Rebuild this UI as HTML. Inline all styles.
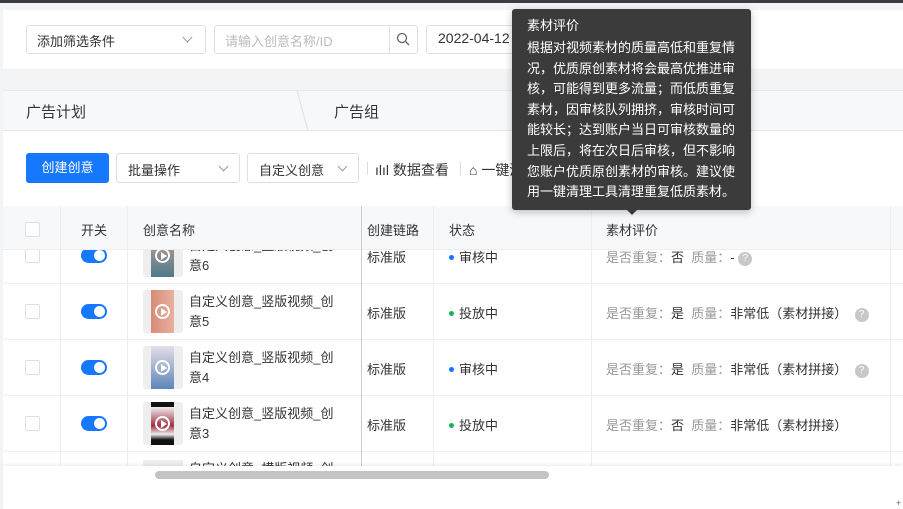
<!DOCTYPE html>
<html><head><meta charset="utf-8"><style>
*{box-sizing:border-box;margin:0;padding:0}
body{width:903px;height:509px;overflow:hidden;background:#f3f4f6;font-family:"Liberation Sans","Noto Sans CJK SC",sans-serif;font-size:13px;color:#333;position:relative}
.a{position:absolute}
.box{position:absolute;background:#fff;border:1px solid #dcdfe6;border-radius:3px}
.chev{position:absolute;width:7px;height:7px;border-right:1px solid #999;border-bottom:1px solid #999;transform:rotate(45deg)}
.cb{position:absolute;left:25px;width:15px;height:15px;border:1px solid #dcdfe6;border-radius:2px;background:#fff}
.sw{position:absolute;left:81px;width:26px;height:15px;border-radius:8px;background:#1677ff}
.sw:after{content:"";position:absolute;right:2px;top:2px;width:11px;height:11px;border-radius:50%;background:#fff}
.th{position:absolute;left:143px;width:40px;height:43px;background:#eee;border-radius:3px;overflow:hidden}
.th i{position:absolute;left:8px;top:0;width:23px;height:43px}
.th b{position:absolute;left:12px;top:14px;width:15px;height:15px;border:2px solid #fff;border-radius:50%}
.th b:after{content:"";position:absolute;left:4px;top:2px;border-left:6px solid #fff;border-top:4px solid transparent;border-bottom:4px solid transparent}
.txt{position:absolute;left:189px;font-size:13px;line-height:20px;color:#333}
.row{position:absolute;left:3px;right:0;height:56px;background:#fff;border-bottom:1px solid #eee}
.g{color:#999}
.dot{display:inline-block;width:5px;height:5px;border-radius:50%;margin-right:5px;vertical-align:2px}
.q{display:inline-block;width:14px;height:14px;border-radius:50%;background:#c8c8c8;color:#fff;font-size:10px;text-align:center;line-height:14px;vertical-align:1px}
.vl{position:absolute;top:206px;width:1px;height:260px;background:#eee}
</style></head><body>
<div class="a" style="left:0;top:0;width:903px;height:3px;background:#3c3d42"></div>
<div class="a" style="left:3px;top:10px;width:900px;height:59px;background:#fff"></div>
<div class="box" style="left:26px;top:25px;width:180px;height:29px"></div>
<div class="a" style="left:37px;top:31px;font-size:13px">添加筛选条件</div>
<div class="chev" style="left:184px;top:34px"></div>
<div class="box" style="left:214px;top:25px;width:204px;height:29px"></div>
<div class="a" style="left:389px;top:25px;width:1px;height:29px;background:#dcdfe6"></div>
<div class="a" style="left:225px;top:31px;color:#bbb">请输入创意名称/ID</div>
<svg class="a" style="left:396px;top:32px" width="14" height="14"><circle cx="6" cy="6" r="4.5" fill="none" stroke="#666" stroke-width="1.3"/><line x1="9.5" y1="9.5" x2="13" y2="13" stroke="#666" stroke-width="1.3"/></svg>
<div class="box" style="left:426px;top:25px;width:150px;height:29px"></div>
<div class="a" style="left:438px;top:30px;font-size:14px">2022-04-12</div>
<div class="a" style="left:3px;top:90px;width:900px;height:41px;background:#f7f8fa;border-top:1px solid #e8e9ee;border-bottom:1px solid #e3e6ef"></div>
<div class="a" style="left:26px;top:101px;font-size:15px">广告计划</div>
<svg class="a" style="left:295px;top:90px" width="20" height="41"><line x1="2" y1="0" x2="13" y2="41" stroke="#dde0e6"/></svg>
<div class="a" style="left:334px;top:101px;font-size:15px">广告组</div>
<div class="a" style="left:3px;top:131px;width:900px;height:75px;background:#fff"></div>
<div class="a" style="left:26px;top:153px;width:83px;height:30px;background:#1677ff;border-radius:3px;color:#fff;text-align:center;line-height:30px">创建创意</div>
<div class="box" style="left:116px;top:153px;width:124px;height:30px"></div>
<div class="a" style="left:128px;top:160px">批量操作</div><div class="chev" style="left:220px;top:163px"></div>
<div class="box" style="left:247px;top:153px;width:112px;height:30px"></div>
<div class="a" style="left:259px;top:160px">自定义创意</div><div class="chev" style="left:339px;top:163px"></div>
<div class="a" style="left:367px;top:162px;width:1px;height:13px;background:#ddd"></div>
<div class="a" style="left:375px;top:160px;font-size:14px">ılıl 数据查看</div>
<div class="a" style="left:460px;top:162px;width:1px;height:13px;background:#ddd"></div>
<div class="a" style="left:469px;top:160px;font-size:14px">⌂ 一键清理</div>

<div class="row" style="top:250px;height:34px"></div>
<div class="row" style="top:284px"></div>
<div class="row" style="top:340px"></div>
<div class="row" style="top:396px"></div>
<div class="row" style="top:452px;height:14px;border:0"></div>

<div class="a" style="left:3px;top:206px;width:900px;height:44px;background:#f7f8fa;border-bottom:1px solid #eee"></div>
<div class="cb" style="top:222px"></div>
<div class="vl" style="left:60px"></div>
<div class="vl" style="left:127px"></div>
<div class="vl" style="left:433px"></div>
<div class="vl" style="left:591px"></div>
<div class="vl" style="left:890px"></div>
<div class="a" style="left:81px;top:220px">开关</div>
<div class="a" style="left:143px;top:220px">创意名称</div>
<div class="a" style="left:367px;top:220px">创建链路</div>
<div class="a" style="left:449px;top:220px">状态</div>
<div class="a" style="left:606px;top:220px">素材评价</div>

<div class="a" style="left:0;top:250px;width:903px;height:34px;overflow:hidden">
 <div class="a" style="left:0;top:-22px;width:903px;height:56px">
  <div class="cb" style="top:20px"></div><div class="sw" style="top:20px"></div>
  <div class="th" style="top:6px"><i style="background:linear-gradient(#c9a090,#4d7a8c)"></i><b></b></div>
  <div class="txt" style="top:8px">自定义创意_竖版视频_创<br>意6</div>
  <div class="a" style="left:367px;top:19px">标准版</div>
  <div class="a" style="left:449px;top:19px"><span class="dot" style="background:#1677ff"></span>审核中</div>
  <div class="a" style="left:606px;top:19px"><span class="g">是否重复：</span>否 &nbsp;<span class="g">质量：</span>- <span class="q">?</span></div>
 </div>
</div>

<div class="cb" style="top:304px"></div><div class="sw" style="top:304px"></div>
<div class="th" style="top:290px"><i style="background:linear-gradient(90deg,#d88c78,#e8b0a0)"></i><b></b></div>
<div class="txt" style="top:292px">自定义创意_竖版视频_创<br>意5</div>
<div class="a" style="left:367px;top:303px">标准版</div>
<div class="a" style="left:449px;top:303px"><span class="dot" style="background:#19b35a"></span>投放中</div>
<div class="a" style="left:606px;top:303px"><span class="g">是否重复：</span>是 &nbsp;<span class="g">质量：</span>非常低（素材拼接） &nbsp;<span class="q">?</span></div>

<div class="cb" style="top:360px"></div><div class="sw" style="top:360px"></div>
<div class="th" style="top:346px"><i style="background:linear-gradient(#e7dde8,#5b86b8)"></i><b></b></div>
<div class="txt" style="top:348px">自定义创意_竖版视频_创<br>意4</div>
<div class="a" style="left:367px;top:359px">标准版</div>
<div class="a" style="left:449px;top:359px"><span class="dot" style="background:#1677ff"></span>审核中</div>
<div class="a" style="left:606px;top:359px"><span class="g">是否重复：</span>是 &nbsp;<span class="g">质量：</span>非常低（素材拼接） &nbsp;<span class="q">?</span></div>

<div class="cb" style="top:416px"></div><div class="sw" style="top:416px"></div>
<div class="th" style="top:402px"><i style="background:linear-gradient(#111 0 12%,#eee 12%,#a03040 55%,#eee 75%,#111 88%)"></i><b></b></div>
<div class="txt" style="top:404px">自定义创意_竖版视频_创<br>意3</div>
<div class="a" style="left:367px;top:415px">标准版</div>
<div class="a" style="left:449px;top:415px"><span class="dot" style="background:#19b35a"></span>投放中</div>
<div class="a" style="left:606px;top:415px"><span class="g">是否重复：</span>否 &nbsp;<span class="g">质量：</span>非常低（素材拼接）</div>

<div class="a" style="left:143px;top:460px;width:40px;height:6px;background:#eee"></div>
<div class="a" style="left:189px;top:459px;height:7px;overflow:hidden;line-height:20px">自定义创意_横版视频_创</div>
<div class="a" style="left:361px;top:206px;width:1px;height:260px;background:#ccc"></div>
<div class="a" style="left:3px;top:466px;width:900px;height:43px;background:#fff;box-shadow:0 -2px 3px rgba(0,0,0,.06)"></div>
<div class="a" style="left:155px;top:471px;width:394px;height:8px;border-radius:4px;background:#c4c4c4"></div>
<div class="a" style="left:896px;top:498px;font-size:9px;color:#666">+</div>

<div class="a" style="left:512px;top:9px;width:239px;height:201px;background:#3b3b3b;border-radius:3px;box-shadow:0 2px 8px rgba(0,0,0,.25);color:#fff;font-size:13px;line-height:20.6px;padding:8px 14px 0 15px">
<div style="line-height:17px;margin-bottom:4px">素材评价</div>根据对视频素材的质量高低和重复情况，优质原创素材将会最高优推进审核，可能得到更多流量；而低质重复素材，因审核队列拥挤，审核时间可能较长；达到账户当日可审核数量的上限后，将在次日后审核，但不影响您账户优质原创素材的审核。建议使用一键清理工具清理重复低质素材。</div>
<div class="a" style="left:627px;top:210px;border-top:5px solid #3b3b3b;border-left:5px solid transparent;border-right:5px solid transparent"></div>
</body></html>
